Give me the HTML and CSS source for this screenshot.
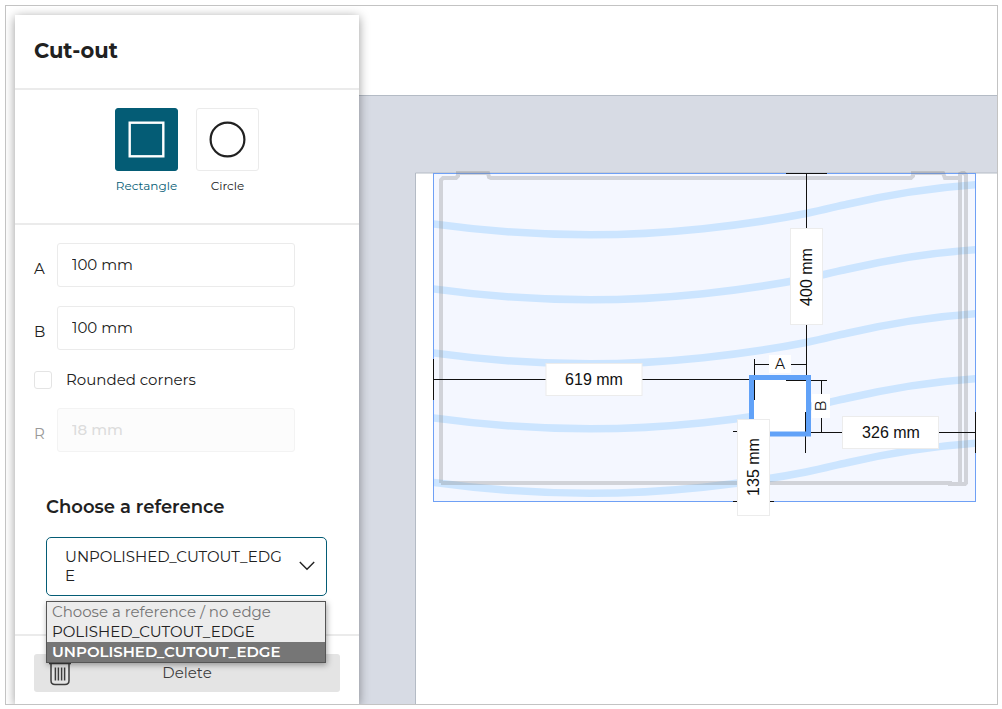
FILE: index.html
```html
<!DOCTYPE html>
<html lang="en">
<head>
<meta charset="utf-8">
<title>Cut-out</title>
<link rel="stylesheet" href="styles.css">
</head>
<body>
<main class="frame">
  <form class="panel">
    <header class="panel-header"><h1 class="title">Cut-out</h1></header>

    <section class="shapes" aria-label="Shape">
      <button type="button" class="shape selected" aria-pressed="true">
        <span class="tile">
          <svg width="37" height="37" viewBox="0 0 37 37" aria-hidden="true"><rect x="1.700" y="1.700" width="33.600" height="33.600" fill="none" stroke="currentColor" stroke-width="2.400"/></svg>
        </span>
        <span>Rectangle</span>
      </button>
      <button type="button" class="shape" aria-pressed="false">
        <span class="tile">
          <svg width="37" height="37" viewBox="0 0 37 37" aria-hidden="true"><circle cx="18.500" cy="18.500" r="16.900" fill="none" stroke="currentColor" stroke-width="2.200"/></svg>
        </span>
        <span>Circle</span>
      </button>
    </section>

    <section class="sizes">
      <div class="field"><label for="a">A</label><input id="a" type="text" value="100 mm"></div>
      <div class="field"><label for="b">B</label><input id="b" type="text" value="100 mm"></div>
      <div class="check"><input id="rounded" type="checkbox"><label for="rounded">Rounded corners</label></div>
      <div class="field disabled"><label for="r">R</label><input id="r" type="text" value="18 mm" disabled></div>
    </section>

    <section class="reference">
      <h2 class="subtitle" id="ref-title">Choose a reference</h2>
      <div class="dropdown">
        <button type="button" class="dropdown-value" aria-haspopup="listbox" aria-expanded="true" aria-controls="edge">
          <span class="value">UNPOLISHED_CUTOUT_EDGE</span>
          <svg width="16" height="10" viewBox="0 0 16 10" aria-hidden="true"><path d="M.8 1 8 8.300 15.200 1" fill="none" stroke="currentColor" stroke-width="1.400"/></svg>
        </button>
        <select id="edge" class="options" size="3" aria-labelledby="ref-title">
          <option class="option placeholder" value="" disabled>Choose a reference / no edge</option>
          <option class="option">POLISHED_CUTOUT_EDGE</option>
          <option class="option" selected>UNPOLISHED_CUTOUT_EDGE</option>
        </select>
      </div>
    </section>

    <footer class="panel-footer">
      <button type="button" class="delete">
        <svg width="22" height="26" viewBox="0 0 22 26" fill="none" stroke="currentColor" stroke-width="1.500" aria-hidden="true"><path d="M0 3.500h22M6.500 3.500V1h9v2.500M2 3.500V20.500Q2 24.500 6 24.500H16Q20 24.500 20 20.500V3.500M6.400 7.500V20.500M9.400 7.500V20.500M12.600 7.500V20.500M15.600 7.500V20.500"/></svg>
        <span>Delete</span>
      </button>
    </footer>
  </form>

  <svg class="plan" viewBox="359 6 638 698" preserveAspectRatio="xMinYMin slice" role="img" aria-label="Worktop plan">
    <defs>
      <clipPath id="plate"><rect x="434" y="174" width="541" height="327"/></clipPath>
      <path id="wave" d="M430 223.500Q510 234.800 590 234.800C665 234.800 745 225.500 806 213.500C824 210 838 206 846 204.500Q915 188.500 978 184.500"/>
    </defs>
    <path class="wall" d="M340 95.500H1010V173H415.500V720H340Z"/>
    <rect class="plate" x="433.500" y="173.500" width="542" height="328"/>
    <g class="grain" clip-path="url(#plate)">
      <use href="#wave"/><use href="#wave" y="65"/><use href="#wave" y="129"/><use href="#wave" y="194"/><use href="#wave" y="258.500"/>
    </g>
    <path class="cabinet" d="M441 483V180L443 178H456L458 176V173H488L489 177L491 178H911L913 176V173H943L945 178H960M960 484V174L962 173H964L966 175V483L965 484H950V483H441"/>

    <rect class="hole" x="751.500" y="377.500" width="57" height="56.500"/>
    <g class="dims">
      <path d="M786 173.500H827M806.500 173V375M805.500 412V453M433.500 359V400M433 379.500H749M754.500 359V400M754 364.500H806M786 380.500H827M821.500 380V432M811 432.500H975M975.500 412V453M733 431.500H743M733 501.500H774"/>
    </g>
    <rect class="cutout" x="751.500" y="377.500" width="57" height="56.500"/>

    <g class="tags">
      <rect x="546" y="363.500" width="96" height="32"/>
      <rect x="842.500" y="416.500" width="96" height="32"/>
      <rect x="790.500" y="228.500" width="32" height="96"/>
      <rect x="737.500" y="419.500" width="32" height="96"/>
    </g>
    <g class="letter-tags">
      <rect x="769" y="355" width="22" height="18"/>
      <rect x="812" y="394" width="18" height="24"/>
    </g>
    <g class="lengths">
      <text x="594" y="385">619 mm</text>
      <text x="891" y="438">326 mm</text>
      <text transform="translate(812 277) rotate(-90)">400 mm</text>
      <text transform="translate(759 467) rotate(-90)">135 mm</text>
    </g>
    <g class="letters">
      <text x="780" y="369">A</text>
      <text transform="translate(826 406) rotate(-90)">B</text>
    </g>
  </svg>
</main>
</body>
</html>
```

FILE: styles.css
```css
* { box-sizing: border-box; }

body {
  margin: 0;
  padding: 5px 4px 4px 5px;
  background: #fff;
  color: #212121;
  font: 15px/20px Montserrat, Inter, sans-serif;
}

button, input, select { font: inherit; color: inherit; }
h1, h2 { margin: 0; }

.frame {
  display: flex;
  height: calc(100vh - 9px);
  min-height: 640px;
  border: 1px solid #c3c3c3;
  overflow: hidden;
}

.panel {
  position: relative;
  z-index: 1;
  flex: 0 0 344px;
  margin: 9px 0 0 9px;
  background: #fff;
  box-shadow: 0 2px 10px rgba(0, 0, 0, .4);
}

.panel-header {
  padding: 21px 19px 22px;
  border-bottom: 2px solid #ebebeb;
}

.title { font-size: 21px; line-height: 30px; font-weight: 700; }

.shapes {
  display: flex;
  justify-content: center;
  gap: 18px;
  padding: 18px 0 27px;
  border-bottom: 2px solid #ebebeb;
}

.shape {
  display: flex;
  flex-direction: column;
  align-items: center;
  gap: 5px;
  width: 63px;
  padding: 0;
  border: 0;
  background: none;
  font-size: 12px;
}

.tile {
  display: grid;
  place-items: center;
  width: 63px;
  height: 63px;
  border: 1px solid #ebebeb;
  border-radius: 3px;
}

.selected { color: #045c75; }
.selected .tile { color: #fff; background: #045c75; border-color: #045c75; }

.sizes { padding: 18px 64px 0 19px; }

.field {
  display: grid;
  grid-template-columns: 23px 1fr;
  align-items: center;
}

.field + .field { margin-top: 19px; }
.field label { padding-top: 7px; }

.field input {
  width: 100%;
  height: 44px;
  padding: 0 14px 2px;
  border: 1px solid #ebebeb;
  border-radius: 3px;
  background: #fff;
}

.disabled label { color: #999; }
.disabled input { color: #dcdcdc; background: #fcfcfc; border-color: #f3f3f3; font-weight: 500; }

.check {
  display: flex;
  align-items: center;
  gap: 14px;
  margin: 20px 0 18px;
}

.check input {
  appearance: none;
  width: 18px;
  height: 18px;
  margin: 0;
  border: 1px solid #e4e4e4;
  border-radius: 3px;
}

.reference {
  padding: 43px 32px 38px 31px;
  border-bottom: 2px solid #ebebeb;
}

.subtitle { margin-bottom: 17px; font-size: 18px; line-height: 25px; font-weight: 600; }
.dropdown { position: relative; }

.dropdown-value {
  display: flex;
  align-items: center;
  justify-content: space-between;
  width: 100%;
  height: 59px;
  padding: 0 11px 2px 18px;
  border: 1px solid #045c75;
  border-radius: 5px;
  background: #fff;
  line-height: 19px;
  text-align: left;
}

.value { width: 218px; overflow-wrap: anywhere; }

.options {
  position: absolute;
  top: 100%;
  left: 0;
  right: 1px;
  width: calc(100% - 1px);
  height: 62px;
  margin-top: 5px;
  padding: 0;
  border: 1px solid #555;
  border-radius: 0;
  outline: 0;
  overflow: hidden;
  background: #ececec;
  box-shadow: 1px 2px 6px rgba(0, 0, 0, .35);
}

.option { height: 20px; min-height: 20px; padding: 0 5px; line-height: 20px; color: #212121; }
.placeholder { color: #757575; }
.option:checked {
  background: linear-gradient(#767676, #767676);
  -webkit-text-fill-color: #fff;
  font-weight: 600;
}

.panel-footer { padding: 18px 19px 12px; }

.delete {
  display: grid;
  grid-template-columns: 22px 1fr 22px;
  align-items: center;
  width: 100%;
  height: 38px;
  padding: 0 15px;
  border: 0;
  border-radius: 3px;
  background: #e4e4e4;
  color: #3d3d3d;
}

.plan { flex: 1; min-width: 0; height: 100%; }
.wall { fill: #d7dbe4; stroke: #b4bbc5; }
.plate { fill: #f4f7ff; stroke: #6fa0f5; }
.grain { fill: none; stroke: #cce5ff; stroke-width: 7.500px; }
.cabinet { fill: none; stroke: #808080; stroke-opacity: .3; stroke-width: 4px; }
.hole { fill: #fff; }
.cutout { fill: none; stroke: #61a2f8; stroke-width: 5px; }
.dims { fill: none; stroke: #111; }
.tags { fill: #fff; stroke: #ececec; }
.letter-tags { fill: #fff; }
.lengths { font: 16px "Liberation Sans", Arial, sans-serif; fill: #111; text-anchor: middle; }
.letters { font-size: 14px; fill: #111; text-anchor: middle; }
```
